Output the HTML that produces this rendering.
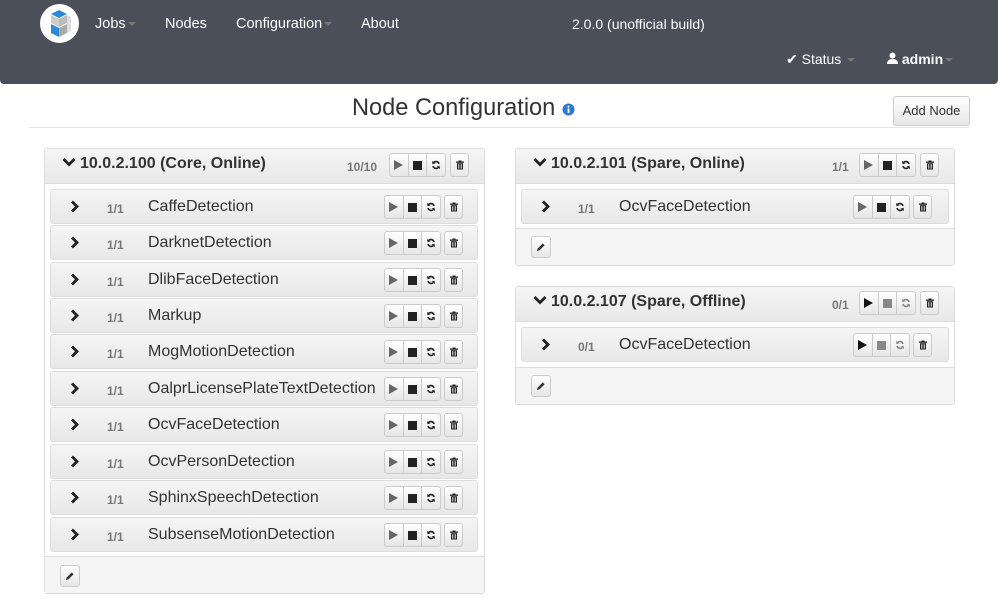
<!DOCTYPE html>
<html><head><meta charset="utf-8"><style>
*{box-sizing:border-box}
body{margin:0;width:998px;height:600px;background:#fff;font-family:"Liberation Sans",sans-serif;color:#333;position:relative;overflow:hidden}
.nav{position:absolute;left:0;top:0;width:998px;height:84px;background:#4a4f5a;border-radius:0 0 4px 4px}
.nav span{position:absolute;color:#fff;font-size:14.5px}
.caret{display:inline-block;width:0;height:0;border-left:4px solid transparent;border-right:4px solid transparent;border-top:4px solid #777;vertical-align:middle;margin-left:2px}
.logo{position:absolute;left:40px;top:4px;width:39px;height:39px;border-radius:50%;background:#fff}
h1{position:absolute;left:352px;top:95px;margin:0;font-weight:normal;font-size:23.6px;color:#333}
.hr{position:absolute;left:29px;top:127px;width:940px;border-top:1px solid #e5e5e5}
.add{position:absolute;left:893px;top:96px;width:77px;height:30px;border:1px solid #ccc;border-radius:3px;background:linear-gradient(#fff,#e6e6e6);font-size:13px;text-align:center;line-height:28px;color:#333}
.panel{position:absolute;border:1px solid #ddd;border-radius:3px;background:#fff}
.ph{position:absolute;left:0;right:0;top:0;height:35px;background:linear-gradient(#f5f5f5,#e8e8e8);border-bottom:1px solid #ddd}
.ph b{position:absolute;left:35px;top:6px;font-size:16px;color:#333}
.ph svg.dc{position:absolute;left:17px;top:8px}
.pf{position:absolute;left:0;right:0;bottom:0;background:#f5f5f5;border-top:1px solid #ddd}
.cnt{position:absolute;font-size:12px;color:#777;font-weight:bold}
.row{position:absolute;height:35px;border:1px solid #ddd;border-radius:3px;background:linear-gradient(#f5f5f5,#e8e8e8)}
.row .chev{position:absolute;left:19px;top:10px}
.row .c{position:absolute;left:56px;top:12px;font-size:12px;color:#777;font-weight:bold}
.row .n{position:absolute;left:97px;top:8px;font-size:16px;color:#333}
.bg{position:absolute;height:24px;width:57px;border:1px solid #ccc;border-radius:3px;background:linear-gradient(#fff,#e6e6e6);display:flex}
.bg i{flex:1;border-right:1px solid #ccc;display:flex;align-items:center;justify-content:center;font-style:normal}
.bg i:last-child{border-right:0}
.tr{position:absolute;height:24px;width:19px;border:1px solid #ccc;border-radius:3px;background:linear-gradient(#fff,#e6e6e6);display:flex;align-items:center;justify-content:center}
.pen{position:absolute;width:20px;height:22px;border:1px solid #ccc;border-radius:3px;background:linear-gradient(#fff,#e6e6e6);display:flex;align-items:center;justify-content:center}
.play{width:0;height:0;border-top:5px solid transparent;border-bottom:5px solid transparent;border-left:9px solid #666}
.stop{width:9px;height:9px;background:#222}
</style></head><body>
<svg width="0" height="0" style="position:absolute"><defs>
<symbol id="rf" viewBox="0 0 10 10"><path d="M8 4A3.2 3.2 0 0 0 2.2 3M2 6A3.2 3.2 0 0 0 7.8 7" stroke="currentColor" stroke-width="1.6" fill="none"/><path d="M1 1L1.5 4.3L4.5 3.4Z M9 9L8.5 5.7L5.5 6.6Z" fill="currentColor"/></symbol>
<symbol id="tb" viewBox="0 0 10 10"><rect x="1" y="1.5" width="8" height="1.3" fill="#222"/><rect x="3.5" y="0.5" width="3" height="1.2" fill="#222"/><path d="M2 3.3H8V9.5H2Z M3.3 4.2V8.6H4.3V4.2Z M5.7 4.2V8.6H6.7V4.2Z" fill="#222" fill-rule="evenodd"/></symbol>
<symbol id="pn" viewBox="0 0 10 10"><path d="M1 9L1.6 6.6L6.8 1.4L8.6 3.2L3.4 8.4Z" fill="#333"/></symbol>
<symbol id="rc" viewBox="0 0 10 13"><path d="M1 2.5L3 0.5L9 6.5L3 12.5L1 10.5L5 6.5Z" fill="#222"/></symbol>
<symbol id="dn" viewBox="0 0 14 10"><path d="M0.5 3L2.5 1L7 5.5L11.5 1L13.5 3L7 9.5Z" fill="#222"/></symbol>
</defs></svg>
<div class="nav">
<div class="logo"><svg width="39" height="39" viewBox="0 0 39 39"><polygon points="19,6 27,10 19,14 11,10" fill="#2a8ad6"/><polygon points="11,11 19,15 19,23 11,19" fill="#ccc"/><polygon points="19,15 27,11 27,19 19,23" fill="#bbb"/><polygon points="11,20 19,24 19,33 11,29" fill="#2a8ad6"/><polygon points="19,24 27,20 27,29 19,33" fill="#aaa"/><polygon points="27,11 31,13 31,27 27,29" fill="#ddd"/></svg></div>
<span style="left:95px;top:16px">Jobs<i class="caret"></i></span>
<span style="left:165px;top:16px">Nodes</span>
<span style="left:236px;top:16px">Configuration<i class="caret"></i></span>
<span style="left:361px;top:16px">About</span>
<span style="left:572px;top:16px;font-size:14px">2.0.0 (unofficial build)</span>
<span style="left:786px;top:51px;font-size:14px">✔ Status <i class="caret"></i></span>
<span style="left:887px;top:51px;font-size:14px;font-weight:bold"><svg width="11" height="12" viewBox="0 0 11 12"><circle cx="5.5" cy="3.5" r="3" fill="#fff"/><path d="M0 12 Q0 7 5.5 7 Q11 7 11 12Z" fill="#fff"/></svg> admin<i class="caret"></i></span>
</div>
<h1>Node Configuration <svg width="13" height="13" viewBox="0 0 13 13" style="vertical-align:-1px"><circle cx="6.5" cy="6.5" r="6" fill="#2a7ad6"/><rect x="5.6" y="5.5" width="1.8" height="4.5" fill="#fff"/><circle cx="6.5" cy="3.6" r="1" fill="#fff"/></svg></h1>
<div class="add">Add Node</div>
<div class="hr"></div>

<div class="panel" style="left:44px;top:148px;width:441px;height:446px">
<div class="ph"><svg class="dc" width="14" height="10"><use href="#dn"/></svg><b>10.0.2.100 (Core, Online)</b><span class="cnt" style="left:302px;top:11px">10/10</span></div>
<div class="pf" style="height:37px"></div>
</div>
<div class="panel" style="left:515px;top:148px;width:440px;height:118px">
<div class="ph"><svg class="dc" width="14" height="10"><use href="#dn"/></svg><b>10.0.2.101 (Spare, Online)</b><span class="cnt" style="left:316px;top:11px">1/1</span></div>
<div class="pf" style="height:37px"></div>
</div>
<div class="panel" style="left:515px;top:286px;width:440px;height:119px">
<div class="ph"><svg class="dc" width="14" height="10"><use href="#dn"/></svg><b>10.0.2.107 (Spare, Offline)</b><span class="cnt" style="left:316px;top:11px">0/1</span></div>
<div class="pf" style="height:37px"></div>
</div>

<div class="row" style="left:50px;top:189px;width:428px"><svg class="chev" width="10" height="13"><use href="#rc"/></svg><span class="c">1/1</span><span class="n">CaffeDetection</span></div>
<div class="row" style="left:50px;top:225px;width:428px"><svg class="chev" width="10" height="13"><use href="#rc"/></svg><span class="c">1/1</span><span class="n">DarknetDetection</span></div>
<div class="row" style="left:50px;top:262px;width:428px"><svg class="chev" width="10" height="13"><use href="#rc"/></svg><span class="c">1/1</span><span class="n">DlibFaceDetection</span></div>
<div class="row" style="left:50px;top:298px;width:428px"><svg class="chev" width="10" height="13"><use href="#rc"/></svg><span class="c">1/1</span><span class="n">Markup</span></div>
<div class="row" style="left:50px;top:334px;width:428px"><svg class="chev" width="10" height="13"><use href="#rc"/></svg><span class="c">1/1</span><span class="n">MogMotionDetection</span></div>
<div class="row" style="left:50px;top:371px;width:428px"><svg class="chev" width="10" height="13"><use href="#rc"/></svg><span class="c">1/1</span><span class="n">OalprLicensePlateTextDetection</span></div>
<div class="row" style="left:50px;top:407px;width:428px"><svg class="chev" width="10" height="13"><use href="#rc"/></svg><span class="c">1/1</span><span class="n">OcvFaceDetection</span></div>
<div class="row" style="left:50px;top:444px;width:428px"><svg class="chev" width="10" height="13"><use href="#rc"/></svg><span class="c">1/1</span><span class="n">OcvPersonDetection</span></div>
<div class="row" style="left:50px;top:480px;width:428px"><svg class="chev" width="10" height="13"><use href="#rc"/></svg><span class="c">1/1</span><span class="n">SphinxSpeechDetection</span></div>
<div class="row" style="left:50px;top:517px;width:428px"><svg class="chev" width="10" height="13"><use href="#rc"/></svg><span class="c">1/1</span><span class="n">SubsenseMotionDetection</span></div>
<div class="row" style="left:521px;top:189px;width:428px"><svg class="chev" width="10" height="13"><use href="#rc"/></svg><span class="c">1/1</span><span class="n">OcvFaceDetection</span></div>
<div class="row" style="left:521px;top:327px;width:428px"><svg class="chev" width="10" height="13"><use href="#rc"/></svg><span class="c">0/1</span><span class="n">OcvFaceDetection</span></div>

<div class="bg" style="left:384px;top:195px"><i><span class="play"></span></i><i><span class="stop"></span></i><i><svg width="10" height="10" style="color:#222"><use href="#rf"/></svg></i></div><div class="tr" style="left:444px;top:195px"><svg width="10" height="10"><use href="#tb"/></svg></div>
<div class="bg" style="left:384px;top:231px"><i><span class="play"></span></i><i><span class="stop"></span></i><i><svg width="10" height="10" style="color:#222"><use href="#rf"/></svg></i></div><div class="tr" style="left:444px;top:231px"><svg width="10" height="10"><use href="#tb"/></svg></div>
<div class="bg" style="left:384px;top:268px"><i><span class="play"></span></i><i><span class="stop"></span></i><i><svg width="10" height="10" style="color:#222"><use href="#rf"/></svg></i></div><div class="tr" style="left:444px;top:268px"><svg width="10" height="10"><use href="#tb"/></svg></div>
<div class="bg" style="left:384px;top:304px"><i><span class="play"></span></i><i><span class="stop"></span></i><i><svg width="10" height="10" style="color:#222"><use href="#rf"/></svg></i></div><div class="tr" style="left:444px;top:304px"><svg width="10" height="10"><use href="#tb"/></svg></div>
<div class="bg" style="left:384px;top:340px"><i><span class="play"></span></i><i><span class="stop"></span></i><i><svg width="10" height="10" style="color:#222"><use href="#rf"/></svg></i></div><div class="tr" style="left:444px;top:340px"><svg width="10" height="10"><use href="#tb"/></svg></div>
<div class="bg" style="left:384px;top:377px"><i><span class="play"></span></i><i><span class="stop"></span></i><i><svg width="10" height="10" style="color:#222"><use href="#rf"/></svg></i></div><div class="tr" style="left:444px;top:377px"><svg width="10" height="10"><use href="#tb"/></svg></div>
<div class="bg" style="left:384px;top:413px"><i><span class="play"></span></i><i><span class="stop"></span></i><i><svg width="10" height="10" style="color:#222"><use href="#rf"/></svg></i></div><div class="tr" style="left:444px;top:413px"><svg width="10" height="10"><use href="#tb"/></svg></div>
<div class="bg" style="left:384px;top:450px"><i><span class="play"></span></i><i><span class="stop"></span></i><i><svg width="10" height="10" style="color:#222"><use href="#rf"/></svg></i></div><div class="tr" style="left:444px;top:450px"><svg width="10" height="10"><use href="#tb"/></svg></div>
<div class="bg" style="left:384px;top:486px"><i><span class="play"></span></i><i><span class="stop"></span></i><i><svg width="10" height="10" style="color:#222"><use href="#rf"/></svg></i></div><div class="tr" style="left:444px;top:486px"><svg width="10" height="10"><use href="#tb"/></svg></div>
<div class="bg" style="left:384px;top:523px"><i><span class="play"></span></i><i><span class="stop"></span></i><i><svg width="10" height="10" style="color:#222"><use href="#rf"/></svg></i></div><div class="tr" style="left:444px;top:523px"><svg width="10" height="10"><use href="#tb"/></svg></div>
<div class="bg" style="left:853px;top:195px"><i><span class="play"></span></i><i><span class="stop"></span></i><i><svg width="10" height="10" style="color:#222"><use href="#rf"/></svg></i></div><div class="tr" style="left:913px;top:195px"><svg width="10" height="10"><use href="#tb"/></svg></div>
<div class="bg" style="left:853px;top:333px"><i><span class="play" style="border-left-color:#111"></span></i><i><span class="stop" style="background:#888"></span></i><i><svg width="10" height="10" style="color:#888"><use href="#rf"/></svg></i></div><div class="tr" style="left:913px;top:333px"><svg width="10" height="10"><use href="#tb"/></svg></div>
<div class="bg" style="left:389px;top:153px"><i><span class="play"></span></i><i><span class="stop"></span></i><i><svg width="10" height="10" style="color:#222"><use href="#rf"/></svg></i></div><div class="tr" style="left:450px;top:153px"><svg width="10" height="10"><use href="#tb"/></svg></div>
<div class="bg" style="left:859px;top:153px"><i><span class="play"></span></i><i><span class="stop"></span></i><i><svg width="10" height="10" style="color:#222"><use href="#rf"/></svg></i></div><div class="tr" style="left:920px;top:153px"><svg width="10" height="10"><use href="#tb"/></svg></div>
<div class="bg" style="left:859px;top:291px"><i><span class="play" style="border-left-color:#111"></span></i><i><span class="stop" style="background:#888"></span></i><i><svg width="10" height="10" style="color:#888"><use href="#rf"/></svg></i></div><div class="tr" style="left:920px;top:291px"><svg width="10" height="10"><use href="#tb"/></svg></div>
<div class="pen" style="left:60px;top:565px"><svg width="10" height="10"><use href="#pn"/></svg></div>
<div class="pen" style="left:531px;top:236px"><svg width="10" height="10"><use href="#pn"/></svg></div>
<div class="pen" style="left:531px;top:375px"><svg width="10" height="10"><use href="#pn"/></svg></div>
</body></html>
